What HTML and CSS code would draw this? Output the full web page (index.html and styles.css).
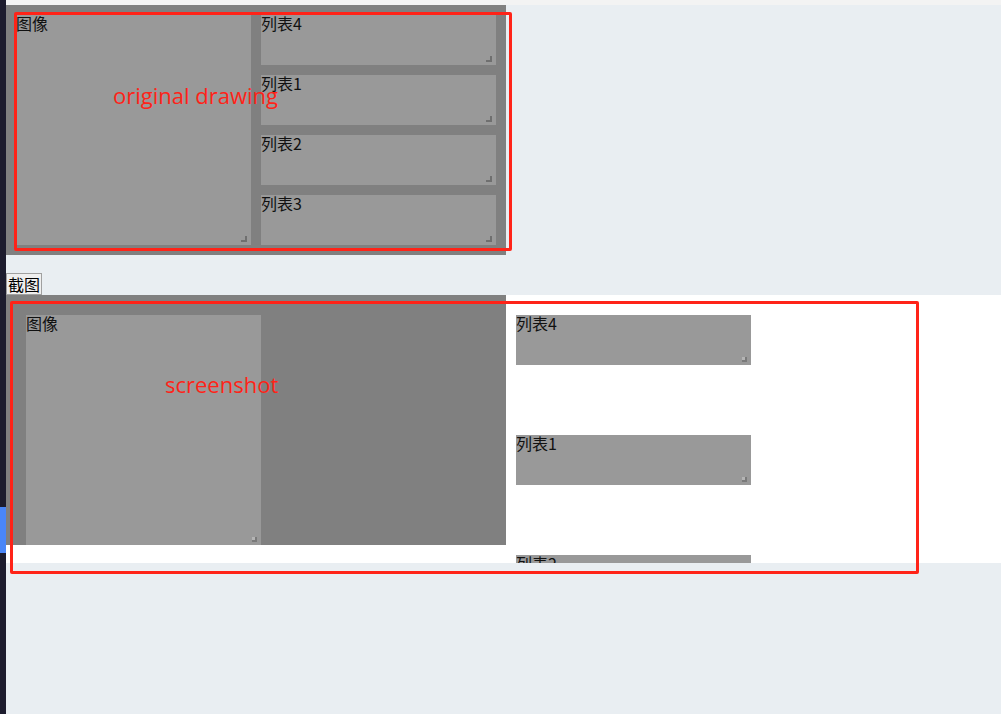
FILE: index.html
```html
<!DOCTYPE html>
<html lang="zh">
<head>
<meta charset="utf-8">
<title>截图</title>
<link rel="stylesheet" href="styles.css">
</head>
<body>
<div class="side"><div class="side-blue"></div></div>
<div class="main">
  <div class="topbar"></div>
  <div class="drawing">
    <div class="box image">图像</div>
    <div class="lists">
      <div class="box list">列表4</div>
      <div class="box list">列表1</div>
      <div class="box list">列表2</div>
      <div class="box list">列表3</div>
    </div>
  </div>
  <button class="shot-btn" type="button">截图</button>
  <div class="shot">
    <div class="shot-frame">
      <div class="sbox simage">图像</div>
    </div>
    <div class="shot-lists">
      <div class="sbox slist">列表4</div>
      <div class="sbox slist">列表1</div>
      <div class="sbox slist">列表2</div>
      <div class="sbox slist">列表3</div>
    </div>
  </div>
</div>
<div class="mark mark-a"></div>
<div class="mark mark-b"></div>
<div class="label label-a">original drawing</div>
<div class="label label-b">screenshot</div>
</body>
</html>
```
FILE: styles.css
```css
html, body {
  margin: 0;
  padding: 0;
  height: 100%;
}
body {
  display: flex;
  background: #e9eef2;
  font-family: "Noto Sans CJK SC", "Liberation Sans", sans-serif;
  font-size: 16px;
  color: #111;
  overflow: hidden;
  position: relative;
}
.side {
  width: 6px;
  flex: none;
  background: #1d1c2e;
  position: relative;
}
.side-blue {
  margin-top: 507px;
  height: 46px;
  background: #4a86f8;
}
.main {
  flex: 1;
  display: flex;
  flex-direction: column;
  align-items: flex-start;
}
.topbar {
  height: 5px;
  align-self: stretch;
  background: #f3f3f3;
}
.drawing {
  width: 500px;
  box-sizing: border-box;
  padding: 10px;
  background: #808080;
  display: grid;
  grid-template-columns: 235px 235px;
  gap: 10px;
}
.lists {
  display: flex;
  flex-direction: column;
  gap: 10px;
}
.box, .sbox {
  background: #999999;
  position: relative;
  line-height: 17px;
  box-sizing: border-box;
}
.image { height: 230px; }
.list { height: 50px; }
.box::after {
  content: "";
  position: absolute;
  right: 4px;
  bottom: 3px;
  width: 4px;
  height: 4px;
  border-right: 2px solid #6f6f6f;
  border-bottom: 2px solid #6f6f6f;
}
.shot-btn {
  margin: 18px 0 0 0;
  height: 22px;
  padding: 0 1px;
  border: 1px solid #a0a0a0;
  background: #efefef;
  font-family: "Noto Sans CJK SC", sans-serif;
  font-size: 16px;
  line-height: 18px;
  color: #000;
  border-radius: 0;
}
.shot {
  align-self: stretch;
  height: 268px;
  background: #ffffff;
  overflow: hidden;
  display: flex;
  align-items: flex-start;
}
.shot-frame {
  width: 500px;
  height: 250px;
  flex: none;
  box-sizing: border-box;
  padding: 20px 0 0 20px;
  background: #808080;
}
.simage {
  width: 235px;
  height: 230px;
}
.shot-lists {
  margin-left: 10px;
  padding-top: 20px;
  display: flex;
  flex-direction: column;
  gap: 70px;
}
.slist {
  width: 235px;
  height: 50px;
  flex: none;
}
.sbox::after {
  content: "";
  position: absolute;
  right: 4px;
  bottom: 3px;
  width: 3px;
  height: 3px;
  background: #b4b4b4;
  border-right: 2px solid #7a7a7a;
  border-bottom: 2px solid #7a7a7a;
}
.mark {
  position: absolute;
  border: 3px solid #ff2318;
  border-radius: 2px;
  box-sizing: border-box;
  pointer-events: none;
}
.mark-a {
  left: 14px;
  top: 12px;
  width: 498px;
  height: 239px;
}
.mark-b {
  left: 10px;
  top: 301px;
  width: 909px;
  height: 273px;
}
.label {
  position: absolute;
  color: #ff2318;
  font-family: "Open Sans", sans-serif;
  font-size: 22px;
  line-height: 26px;
  white-space: nowrap;
}
.label-a {
  left: 113px;
  top: 82px;
}
.label-b {
  left: 165px;
  top: 371px;
}
```
